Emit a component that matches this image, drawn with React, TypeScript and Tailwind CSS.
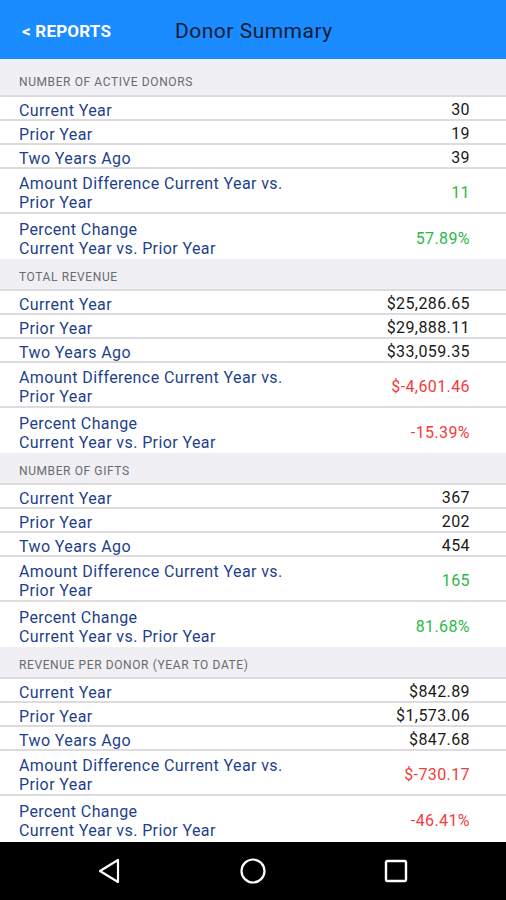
import React from 'react';

type Row = { label: string[]; value: string; tone?: 'pos' | 'neg' };
type Section = { title: string; rows: Row[] };

const sections: Section[] = [
  {
    title: 'Number of Active Donors',
    rows: [
      { label: ['Current Year'], value: '30' },
      { label: ['Prior Year'], value: '19' },
      { label: ['Two Years Ago'], value: '39' },
      { label: ['Amount Difference Current Year vs.', 'Prior Year'], value: '11', tone: 'pos' },
      { label: ['Percent Change', 'Current Year vs. Prior Year'], value: '57.89%', tone: 'pos' },
    ],
  },
  {
    title: 'Total Revenue',
    rows: [
      { label: ['Current Year'], value: '$25,286.65' },
      { label: ['Prior Year'], value: '$29,888.11' },
      { label: ['Two Years Ago'], value: '$33,059.35' },
      { label: ['Amount Difference Current Year vs.', 'Prior Year'], value: '$-4,601.46', tone: 'neg' },
      { label: ['Percent Change', 'Current Year vs. Prior Year'], value: '-15.39%', tone: 'neg' },
    ],
  },
  {
    title: 'Number of Gifts',
    rows: [
      { label: ['Current Year'], value: '367' },
      { label: ['Prior Year'], value: '202' },
      { label: ['Two Years Ago'], value: '454' },
      { label: ['Amount Difference Current Year vs.', 'Prior Year'], value: '165', tone: 'pos' },
      { label: ['Percent Change', 'Current Year vs. Prior Year'], value: '81.68%', tone: 'pos' },
    ],
  },
  {
    title: 'Revenue per Donor (Year to Date)',
    rows: [
      { label: ['Current Year'], value: '$842.89' },
      { label: ['Prior Year'], value: '$1,573.06' },
      { label: ['Two Years Ago'], value: '$847.68' },
      { label: ['Amount Difference Current Year vs.', 'Prior Year'], value: '$-730.17', tone: 'neg' },
      { label: ['Percent Change', 'Current Year vs. Prior Year'], value: '-46.41%', tone: 'neg' },
    ],
  },
];

const App: React.FC = () => {
  return (
    <div className="w-[506px] h-[900px] flex flex-col bg-white overflow-hidden font-['Roboto',sans-serif]">
      {/* Top bar */}
      <div className="h-[59px] shrink-0 bg-[#1a8cff] flex items-center pt-[4px]">
        <span className="pl-[22px] w-[175px] text-white font-bold text-[17px] tracking-[0.2px]">&lt; REPORTS</span>
        <span className="text-[#0c1b33] text-[21px] tracking-[0.5px]">Donor Summary</span>
      </div>

      {/* Report list */}
      <div className="flex-1 overflow-hidden">
        {sections.map((s, si) => (
          <div key={s.title}>
            <div
              className={`bg-[#efeff4] border-b-2 border-[#dcdce0] flex items-center pl-[19px] text-[12px] tracking-[0.6px] text-[#6b6b6b] uppercase ${
                si === 0 ? 'h-[38px] pt-[10px]' : 'h-[32px] pt-[5px]'
              }`}
            >
              {s.title}
            </div>
            {s.rows.map((r, ri) => (
              <div
                key={ri}
                className={`flex items-center justify-between pl-[19px] pr-[36px] pt-[4px] text-[16px] tracking-[0.4px] ${
                  r.label.length > 1 ? 'h-[45px]' : 'h-[24px]'
                } ${ri < s.rows.length - 1 ? 'border-b-2 border-[#dcdce0]' : ''}`}
              >
                <div className="text-[#1e3f8c] leading-[19px]">
                  {r.label.map((l) => (
                    <div key={l}>{l}</div>
                  ))}
                </div>
                <div
                  className={
                    r.tone === 'pos' ? 'text-[#2db84a]' : r.tone === 'neg' ? 'text-[#f23b3b]' : 'text-[#1a1a1a]'
                  }
                >
                  {r.value}
                </div>
              </div>
            ))}
          </div>
        ))}
      </div>

      {/* Android nav bar */}
      <div className="h-[58px] shrink-0 bg-black flex items-center pl-[97px] gap-[116px]">
        <svg width="26" height="26" viewBox="0 0 26 26" fill="none" stroke="white" strokeWidth="2.2" strokeLinejoin="round">
          <path d="M21 2 L21 24 L3 13 Z" />
        </svg>
        <svg width="28" height="28" viewBox="0 0 28 28" fill="none" stroke="white" strokeWidth="2.2">
          <circle cx="14" cy="14" r="11.5" />
        </svg>
        <svg width="26" height="26" viewBox="0 0 26 26" fill="none" stroke="white" strokeWidth="2.4">
          <rect x="3" y="3" width="20" height="20" rx="1.5" />
        </svg>
      </div>
    </div>
  );
};

export default App;
